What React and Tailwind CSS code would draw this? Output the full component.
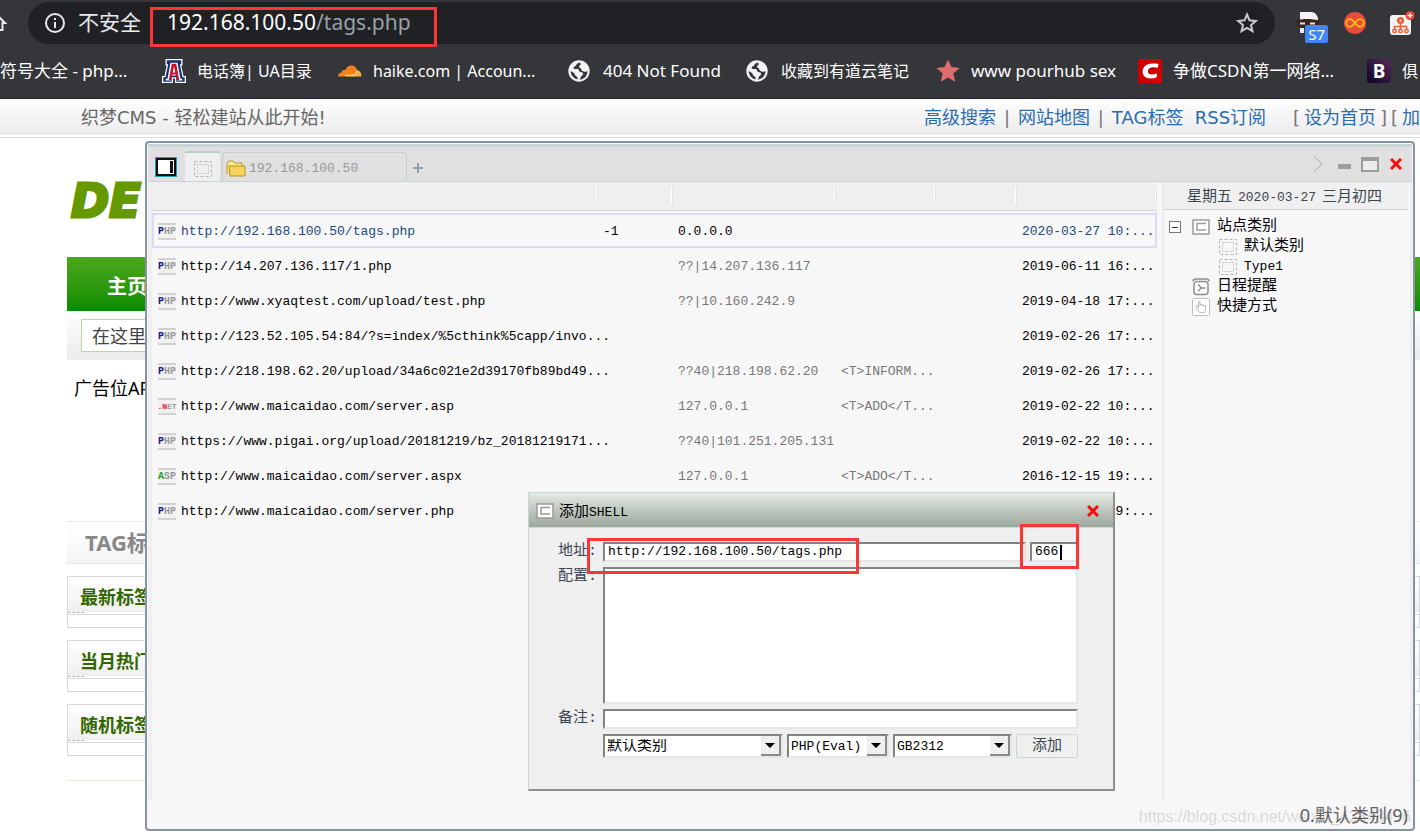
// App.jsx
// Browser window with a site page behind it and the shell manager floating on top.
import React from "react";

const BOOKMARKS = [
  { label: "符号大全 - php...", icon: null, width: "w-[162px]", size: "text-[17px]" },
  { label: "电话簿| UA目录", icon: "arizona", width: "w-[176px]", size: "text-base" },
  { label: "haike.com | Accoun...", icon: "cloud", width: "w-[230px]", size: "text-base" },
  { label: "404 Not Found", icon: "globe", width: "w-[178px]", size: "text-[17px]" },
  { label: "收藏到有道云笔记", icon: "globe", width: "w-[190px]", size: "text-base" },
  { label: "www pourhub sex", icon: "star", width: "w-[202px]", size: "text-[17px]" },
  { label: "争做CSDN第一网络...", icon: "csdn", width: "w-[229px]", size: "text-[17px]" },
  { label: "俱", icon: "bootstrap", width: "w-[80px]", size: "text-base" },
];

const SHELLS = [
  { type: "php", url: "http://192.168.100.50/tags.php", count: "-1", ip: "0.0.0.0", note: "", date: "2020-03-27 10:..." },
  { type: "php", url: "http://14.207.136.117/1.php", ip: "??|14.207.136.117", note: "", date: "2019-06-11 16:..." },
  { type: "php", url: "http://www.xyaqtest.com/upload/test.php", ip: "??|10.160.242.9", note: "", date: "2019-04-18 17:..." },
  { type: "php", url: "http://123.52.105.54:84/?s=index/%5cthink%5capp/invo...", ip: "", note: "", date: "2019-02-26 17:..." },
  { type: "php", url: "http://218.198.62.20/upload/34a6c021e2d39170fb89bd49...", ip: "??40|218.198.62.20", note: "<T>INFORM...", date: "2019-02-26 17:..." },
  { type: "net", url: "http://www.maicaidao.com/server.asp", ip: "127.0.0.1", note: "<T>ADO</T...", date: "2019-02-22 10:..." },
  { type: "php", url: "https://www.pigai.org/upload/20181219/bz_20181219171...", ip: "??40|101.251.205.131", note: "", date: "2019-02-22 10:..." },
  { type: "asp", url: "http://www.maicaidao.com/server.aspx", ip: "127.0.0.1", note: "<T>ADO</T...", date: "2016-12-15 19:..." },
  { type: "php", url: "http://www.maicaidao.com/server.php", ip: "", note: "", date: "2016-12-15 19:..." },
];

const TYPE_BADGE = {
  php: { head: "P", tail: "HP", color: "text-[#16168c]", size: "text-[10px]" },
  net: { head: ".N", tail: "ET", color: "text-[#f01818]", size: "text-[8px]" },
  asp: { head: "A", tail: "SP", color: "text-[#1c9a1c]", size: "text-[10px]" },
};

const SIDE_BLOCKS = ["最新标签", "当月热门", "随机标签"];

/* ---------- icons ---------- */

function BookmarkIcon({ name }) {
  if (name === "arizona")
    return (
      <svg viewBox="0 0 24 24" className="size-6 shrink-0">
        <path d="M3.500 0h17v6.500h-1.200L21.500 17H24v7H13v-4.500h-2V24H0v-7h2.500L4.700 6.500H3.500z" fill="#fff" />
        <path d="M4.800 1.300h14.400v4h-1.400l2.700 13h2.200v4.400h-8.400v-4.400h-4.600v4.400H1.300v-4.400h2.200l2.700-13H4.800z" fill="#12306b" />
        <path d="M8.500 3.800h7l3 16h1.800v1.700h-5v-1.700h.6l-.5-3.300H8.600l-.5 3.300h.6v1.700h-5v-1.700h1.800z" fill="#fff" />
        <path d="M9.800 4.800h4.400l3 16.200h-2.400l-.9-5.500h-3.800L9.200 21H6.800zM12 7.500l-1.300 6h2.600z" fill="#c8102e" />
      </svg>
    );
  if (name === "cloud")
    return (
      <svg viewBox="0 0 24 24" className="size-6 shrink-0">
        <path d="M0 17.500c0-2.500 1.600-3.800 3.600-4 .2-2 2-3 3.600-2.200C8.200 8.200 10.800 6.500 13.200 6.500c3.400 0 5.600 2.400 6 5.200l-3 5.800z" fill="#f38020" />
        <path d="M18.500 11.300c3-.3 5 2 4.800 6.200h-7.500l-8-.2 9.200-1.300z" fill="#faad3f" />
        <path d="M7 16.500l10-.6c.8-.3 1.200-2 1.500-3.500" fill="none" stroke="#fff" strokeWidth=".8" />
      </svg>
    );
  if (name === "globe")
    return (
      <svg viewBox="0 0 24 24" className="size-6 shrink-0">
        <circle cx="11" cy="12" r="10.700" fill="#f1f2f4" />
        <path d="M11.500 3.500c-1 1-3 1-3.400 2.800-.3 1.400-2.600.8-2.400 2.600.2 1.600 2.400 1 4 1.200 1.800.2 1 2.500 2.600 3 1.600.4 2.800.4 2.800 2 0 1.800-2.200 1.600-2.400 3.400-.1 1.300-1 1.600-1.700 2 5.300.2 8.700-4.300 8.500-8.600-1.400 1.200-3.600 1.200-5 .2-1.600-1.200-1-3-2.700-3.400-1.400-.4-.6-2 .4-2.600.9-.6.800-1.700-.7-2.600zM2.600 12c.2 4.400 3.300 7.800 7 8.300.4-1.600-.3-2.500-1.700-3.300-1.200-.7-1-2.600-2.300-3.300-.9-.4-2-.8-3-1.700z" fill="#35363a" />
      </svg>
    );
  if (name === "star")
    return (
      <svg viewBox="0 0 24 24" className="size-6 shrink-0">
        <path d="M12 .5l3.400 7.600 8.300.8-6.300 5.500 1.900 8.300L12 18.400l-7.300 4.300 1.900-8.300L.3 8.900l8.300-.8z" fill="#e16a6c" />
      </svg>
    );
  if (name === "csdn")
    return (
      <svg viewBox="0 0 24 24" className="size-6 shrink-0">
        <rect width="24" height="24" fill="#ce0000" />
        <path d="M20.500 5l-.7 3.800c-2-.5-4-.7-5.600-.5-2.700.3-4 1.800-4.200 3.600-.2 2.200 1 3.600 4 3.600 1.700 0 3.400-.3 5.200-.9l-.7 4c-2.300.7-4.200.9-6.200.8-4.800-.2-8-2.600-7.700-7.200.3-4.500 4-7.500 9.400-7.700 2.500-.1 4.500 0 6.500.5z" fill="#fff" />
      </svg>
    );
  return (
    <span className="flex size-6 shrink-0 items-center justify-center rounded-[3px] bg-linear-to-tr from-[#0c0528] to-[#5a2a58] text-[19px] font-bold text-white">
      B
    </span>
  );
}

function DashedBox() {
  return (
    <svg viewBox="0 0 18 16" className="h-4 w-[18px] shrink-0" fill="none" stroke="#b4b4b4">
      <rect x=".5" y=".5" width="17" height="15" strokeDasharray="3 2" />
      <rect x="3.500" y="3.500" width="11" height="9" strokeDasharray="2 1" stroke="#c8c8c8" />
    </svg>
  );
}

function PanelIcon() {
  return (
    <svg viewBox="0 0 18 16" className="h-4 w-[18px] shrink-0" fill="none">
      <rect x="1" y="1" width="16" height="14" fill="#fff" stroke="#9a9a9a" strokeWidth="1.500" />
      <path d="M14 4.500H5v6.500h9" stroke="#9a9a9a" strokeWidth="1.500" />
    </svg>
  );
}

function RedCross() {
  return (
    <svg viewBox="0 0 12 12" className="size-3" stroke="#f50d0d" strokeWidth="3">
      <path d="M1 1l10 10M11 1L1 11" />
    </svg>
  );
}

function TypeBadge({ type }) {
  const { head, tail, color, size } = TYPE_BADGE[type];
  return (
    <span className={`flex h-[17px] w-[18px] shrink-0 items-center justify-center border-y-2 border-[#d2d2d2] bg-[#f1f1f1] leading-none font-bold text-[#999] ${size}`}>
      <span className={color}>{head}</span>
      {tail}
    </span>
  );
}

/* ---------- browser chrome ---------- */

function AddressBar() {
  return (
    <div className="flex h-11 items-center pt-[2px]">
      <div className="w-[28px] shrink-0">
        <svg viewBox="0 0 28 24" className="h-6 w-[28px]" fill="none" stroke="#e8eaed" strokeWidth="2">
          <path d="M-7 12L-1 6l6 6H2.500v7H-5" />
        </svg>
      </div>
      <div className="flex h-[42px] flex-1 items-center rounded-full bg-[#202124] pr-4 pl-4">
        <svg viewBox="0 0 22 22" className="size-[22px]" fill="none" stroke="#e8eaed" strokeWidth="2">
          <circle cx="11" cy="11" r="9" />
          <path d="M11 10v6M11 6v2" />
        </svg>
        <span className="ml-3 w-[89px] text-[21px] text-[#e8eaed]">不安全</span>
        <div className="flex-1 text-[21px] text-[#9aa0a6]">
          <span className="text-white">192.168.100.50</span>/tags.php
        </div>
        <button aria-label="Bookmark this page">
          <svg viewBox="0 0 24 24" className="size-6" fill="none" stroke="#c7cacd" strokeWidth="2">
            <path d="M12 3.500l2.500 5.800 6.300.6-4.800 4.100 1.500 6.200-5.500-3.300-5.500 3.300L8 14l-4.800-4.100 6.300-.6z" />
          </svg>
        </button>
      </div>
      <div className="flex w-[145px] shrink-0 items-center pl-[21px]">
        <button aria-label="Proxy" className="relative mt-2 mr-[14px] h-8 w-[34px]">
          <svg viewBox="0 0 34 32" className="h-8 w-[34px]">
            <path d="M4 1h12c4 1 6 4 6 8v2H4z" fill="#f4f4f4" />
            <path d="M0 9.500c6-2 16-2 23 0v5c-3 3-8 3-11 0-3 3-8 3-11 0z" fill="#3a2422" />
            <path d="M4 12.500h5M14 12.500h5" stroke="#e5dcda" strokeWidth="2" />
            <path d="M4 17h4v5H4z" fill="#e8e8e8" />
          </svg>
          <span className="absolute right-[2px] bottom-0 rounded-[2px] bg-[#4285f4] px-[3px] text-[15px] leading-[18px] text-white">S7</span>
        </button>
        <button aria-label="Infinity" className="mr-[24px]">
          <svg viewBox="0 0 22 22" className="size-[22px]" fill="none">
            <circle cx="11" cy="11" r="11" fill="#e74c3c" />
            <path d="M11 11C9 8.500 8 7.200 6 7.200a3.800 3.800 0 000 7.600C8 14.800 9 13.500 11 11s3-3.800 5-3.800a3.800 3.800 0 010 7.600C14 14.800 13 13.500 11 11z" stroke="#fbbf0d" strokeWidth="1.800" />
          </svg>
        </button>
        <button aria-label="Site tree">
          <svg viewBox="0 0 25 25" className="size-[25px]" fill="none" stroke="#f05a30" strokeWidth="1.500">
            <rect x="0" y="4" width="21" height="20" rx="3" fill="#f3f3f3" stroke="none" />
            <circle cx="10.500" cy="9.500" r="2.300" strokeWidth="2.500" />
            <path d="M10.500 13v5M4.500 19v-3.500h12V19" />
            <circle cx="4.500" cy="20" r="1.700" />
            <circle cx="10.500" cy="20" r="1.700" />
            <circle cx="16.500" cy="20" r="1.700" />
            <circle cx="20" cy="4.500" r="4.500" fill="#f4422c" stroke="none" />
            <path d="M20 2v5M17.500 4.500h5" stroke="#fff" />
          </svg>
        </button>
      </div>
    </div>
  );
}

function BookmarkBar() {
  return (
    <nav className="flex h-[54px] overflow-hidden text-white">
      {BOOKMARKS.map((b) => (
        <a key={b.label} href="#" className={`flex shrink-0 items-center gap-[11px] whitespace-nowrap ${b.width} ${b.size}`}>
          {b.icon && <BookmarkIcon name={b.icon} />}
          {b.label}
        </a>
      ))}
    </nav>
  );
}

/* ---------- site page ---------- */

function SitePage() {
  return (
    <div className="flex-1 bg-white font-['Noto_Sans','Noto_Sans_CJK_SC',sans-serif] text-lg">
      <div className="flex h-9 items-center justify-between bg-linear-to-b from-white to-[#ebebeb] pt-[2px] pl-[81px] font-['DejaVu_Sans','Noto_Sans_CJK_SC',sans-serif] whitespace-nowrap text-[#666]">
        <span>织梦CMS - 轻松建站从此开始!</span>
        <div className="flex w-[496px] shrink-0 overflow-hidden text-[#2a6cb0]">
          <a href="#">高级搜索</a>
          <span className="w-[23px] text-center text-[#777]">|</span>
          <a href="#">网站地图</a>
          <span className="w-[23px] text-center text-[#777]">|</span>
          <a href="#" className="w-[87px]">TAG标签</a>
          <a href="#" className="w-[103px]">RSS订阅</a>
          <span className="flex gap-1">
            <span className="text-[#777]">[</span>
            <a href="#">设为首页</a>
            <span className="text-[#777]">]</span>
            <span className="text-[#777]">[</span>
            <a href="#">加</a>
          </span>
        </div>
      </div>
      <div className="mt-[2px] border-t border-[#ddd]" />

      <div className="ml-[67px] overflow-hidden">
        <div className="flex h-[119px] items-center pt-2 pl-1 font-['DejaVu_Sans',sans-serif] text-[46px] font-bold text-[#669900] italic [-webkit-text-stroke:3px_#669900]">
          DE
        </div>
        <div className="flex h-[54px] items-center bg-linear-to-b from-[#4aa81c] to-[#008c00] pt-[6px] pl-10 text-xl font-bold text-white">
          主页
        </div>
        <div className="bg-linear-to-b from-white to-[#ebebeb] px-[14px] py-2">
          <input
            aria-label="搜索"
            placeholder="在这里"
            className="h-[33px] w-[400px] border border-[#b5d79b] bg-white px-[10px] text-lg placeholder:text-[#444]"
          />
        </div>
        <p className="mt-[14px] pl-[7px] leading-7 whitespace-nowrap text-black">广告位AP</p>

        <h2 className="mt-[119px] h-[43px] border-y border-[#e6e6e6] bg-linear-to-b from-white to-[#f4f4f4] pl-[18px] text-[22px] leading-10 font-bold text-[#888]">
          TAG标
        </h2>
        {SIDE_BLOCKS.map((title) => (
          <section key={title} className="mt-3 h-[52px] border border-[#d8d8d8]">
            <h3 className="h-[35px] bg-linear-to-b from-white to-[#efefef] pl-3 text-lg leading-10 font-bold text-[#336600]">
              {title}
            </h3>
            <div className="w-4 border-t border-dashed border-[#b4c4a0]" />
            <div className="mt-px border-t border-[#d8d8d8]" />
          </section>
        ))}
        <div className="mt-6 border-t border-[#e4efd3]" />
      </div>
    </div>
  );
}

/* ---------- shell manager ---------- */

function TitleBar() {
  return (
    <div className="flex h-[38px] items-end border-t-[3px] border-b border-[#c9d4d4] bg-[#e0e0e0]">
      <button aria-label="Toggle panel" className="mb-1 ml-[7px] w-[22px]">
        <svg viewBox="0 0 22 20" className="h-5 w-[22px]">
          <rect width="22" height="20" fill="#1ba3b8" />
          <rect x="1" y="1" width="20" height="18" fill="#111" />
          <rect x="3" y="3" width="16" height="14" fill="#fff" />
          <rect x="15" y="4" width="3" height="12" fill="#111" />
        </svg>
      </button>
      <button aria-label="Home" className="ml-[8px] flex h-[30px] w-[35px] items-center justify-center rounded-t-[3px] border-t-2 border-[#b9cccc] bg-[#efefef] pt-1">
        <DashedBox />
      </button>
      <button className="ml-[2px] flex h-[29px] w-[185px] items-center gap-[3px] rounded-t-[4px] border border-b-0 border-[#c5cfcf] pt-[3px] pl-[3px] text-[#999]">
        <svg viewBox="0 0 20 18" className="h-[18px] w-5">
          <path d="M1 14V3l2-2h4l2 2h7v3" fill="#fbe59a" stroke="#b8941c" />
          <path d="M3 6h16v10H4z" fill="#f6d45c" stroke="#b8941c" />
        </svg>
        192.168.100.50
      </button>
      <button aria-label="New tab" className="mb-[8px] ml-[6px]">
        <svg viewBox="0 0 10 10" className="size-[10px]" stroke="#8fa0aa" strokeWidth="2">
          <path d="M5 0v10M0 5h10" />
        </svg>
      </button>
      <div className="mb-2 ml-auto flex items-center pr-[10px]">
        <svg viewBox="0 0 10 18" className="mr-[15px] h-[18px] w-[10px]" fill="none" stroke="#b0b0b0">
          <path d="M1 1l8 8-8 8" />
        </svg>
        <button aria-label="Minimize" className="mt-[5px] mr-[10px] h-[5px] w-[13px] bg-[#9c9c9c]" />
        <button aria-label="Maximize" className="mr-[11px] h-[15px] w-[18px] border-2 border-t-4 border-[#9c9c9c] bg-[#ececec]" />
        <button aria-label="Close">
          <RedCross />
        </button>
      </div>
    </div>
  );
}

function ShellTable() {
  return (
    <table className="w-full table-fixed border-collapse text-left whitespace-nowrap">
      <colgroup>
        <col />
        <col className="w-[75px]" />
        <col className="w-[163px]" />
        <col className="w-[100px]" />
        <col className="w-[81px]" />
        <col className="w-[140px]" />
      </colgroup>
      <thead>
        <tr className="h-[28px] border-b border-[#d2d2d2] bg-[#efefef]">
          {["url", "count", "ip", "note", "extra", "date"].map((key) => (
            <th key={key} className="p-0">
              <div className="border-r border-[#e2e2e2]">
                <div className="h-[17px] border-r border-white" />
              </div>
            </th>
          ))}
        </tr>
        <tr className="h-[3px]" />
      </thead>
      <tbody>
        {SHELLS.map((s, i) => {
          const selected = i === 0;
          return (
            <tr key={s.url} className={`h-[35px] ${selected ? "outline-2 -outline-offset-2 outline-[#d8daf6]" : ""}`}>
              <td className={`p-0 pt-[2px] pl-[6px] ${selected ? "text-[#1b4a7c]" : "text-black"}`}>
                <div className="flex items-center gap-[5px]">
                  <TypeBadge type={s.type} />
                  {s.url}
                </div>
              </td>
              <td className="p-0 pt-[2px] pl-[5px]">{s.count}</td>
              <td className={`p-0 pt-[2px] pl-[5px] ${selected ? "text-black" : "text-[#777]"}`}>{s.ip}</td>
              <td className="p-0 pt-[2px] pl-[5px] text-[#777]">{s.note}</td>
              <td />
              <td className={`p-0 pt-[2px] pl-[5px] ${selected ? "text-[#1b4a7c]" : "text-black"}`}>{s.date}</td>
            </tr>
          );
        })}
      </tbody>
    </table>
  );
}

function CategoryPanel() {
  return (
    <aside className="w-[250px] shrink-0 border-x-2 border-[#ececec] pr-[2px] text-[15px] text-black">
      <div className="flex h-[28px] items-center gap-[6px] border-b border-[#d2d2d2] bg-[#efefef] pt-[5px] pl-[23px] text-[#3c4650]">
        星期五<span className="text-[13px]">2020-03-27</span>三月初四
      </div>
      <ul className="pt-[7px] leading-5">
        <li className="flex items-center pl-[5px]">
          <span className="mr-[11px] flex size-3 items-center justify-center border border-[#777] bg-white">
            <span className="h-px w-[6px] bg-[#333]" />
          </span>
          <PanelIcon />
          <span className="ml-[7px]">站点类别</span>
        </li>
        <li className="flex items-center gap-[7px] pl-[55px]"><DashedBox />默认类别</li>
        <li className="flex items-center gap-[7px] pl-[55px] text-[13px] leading-5"><DashedBox />Type1</li>
        <li className="flex items-center gap-[7px] pl-[28px]">
          <svg viewBox="0 0 18 18" className="size-[18px]" fill="none" stroke="#8e8e8e" strokeWidth="1.500">
            <path d="M1 3.500C1 1 3 1 4 1h10c1 0 3 0 3 2.500" />
            <rect x="2" y="3.500" width="14" height="13" rx="3" fill="#fff" />
            <path d="M6 6.500l3.500 3.500L6 13M9 10h4.500" />
          </svg>
          日程提醒
        </li>
        <li className="flex items-center gap-[7px] pl-[28px]">
          <svg viewBox="0 0 18 18" className="size-[18px]" fill="none" stroke="#bdbdbd">
            <rect x=".5" y=".5" width="17" height="17" rx="1" fill="#fff" />
            <path d="M6.500 10V3.500h1.500V8M8 6.500h2V8M10 7h2v1.500M12 7.500h1.500V12l-1 2.500h-5L4 10V8h1.500l1 2" />
          </svg>
          快捷方式
        </li>
      </ul>
    </aside>
  );
}

const FIELD = "border-2 border-t-[#828282] border-l-[#828282] border-r-[#e6e6e6] border-b-[#e6e6e6] bg-white text-[13px] text-black";

function DropDown({ label, options, className, textClass }) {
  return (
    <div className={`relative ${className}`}>
      <select aria-label={label} className={`h-6 w-full appearance-none pl-[2px] leading-none ${FIELD} ${textClass}`}>
        {options.map((o) => (
          <option key={o}>{o}</option>
        ))}
      </select>
      <span className="pointer-events-none absolute top-[2px] right-[2px] flex h-5 w-5 items-center justify-center border-r-2 border-b-2 border-[#8a8a8a] bg-[#efefef]">
        <svg viewBox="0 0 10 5" className="h-[5px] w-[10px]">
          <path d="M0 0h10L5 5z" fill="#000" />
        </svg>
      </span>
    </div>
  );
}

function AddShellDialog() {
  return (
    <div
      role="dialog"
      aria-label="添加SHELL"
      className="absolute top-[349px] left-[381px] w-[587px] border border-r-2 border-b-2 border-[#c9d4d4] border-r-[#8f8f8f] border-b-[#8f8f8f] bg-[#efefef] pb-[31px]"
    >
      <div className="flex h-[35px] items-center border-b border-[#d5dcd8] bg-linear-to-b from-[#e4ebe4] to-[#9ca79d] pt-[2px] pr-[14px] pl-[7px] text-black">
        <PanelIcon />
        <span className="mr-auto ml-[5px] pt-1 text-[15px]">
          添加<span className="text-[13px]">SHELL</span>
        </span>
        <button aria-label="关闭">
          <RedCross />
        </button>
      </div>

      <form className="pt-[14px] pr-[35px] pl-[29px] text-[15px] leading-5 text-[#3c4650]" onSubmit={(e) => e.preventDefault()}>
        <div className="flex h-5 items-center">
          <label htmlFor="address" className="w-[45px]">地址:</label>
          <input id="address" defaultValue="http://192.168.100.50/tags.php" className={`h-5 flex-1 pl-[3px] ${FIELD}`} />
          <span className="relative ml-1 flex w-[48px]">
            <input aria-label="密码" defaultValue="666" className={`h-5 w-full pl-[3px] ${FIELD}`} />
            {/* text cursor */}
            <span className="absolute top-[3px] left-[30px] h-[15px] w-[2px] bg-black" />
          </span>
        </div>
        <div className="mt-[5px] flex items-start">
          <label htmlFor="config" className="w-[45px]">配置:</label>
          <textarea id="config" className={`h-[137px] flex-1 resize-none ${FIELD}`} />
        </div>
        <div className="mt-[5px] flex h-5 items-center">
          <label htmlFor="remark" className="w-[45px]">备注:</label>
          <input id="remark" className={`h-5 flex-1 ${FIELD}`} />
        </div>
        <div className="mt-[5px] flex gap-1 pl-[45px]">
          <DropDown label="类别" options={["默认类别", "Type1"]} className="w-[180px]" textClass="text-[15px]" />
          <DropDown label="脚本类型" options={["PHP(Eval)"]} className="w-[102px]" textClass="" />
          <DropDown label="编码" options={["GB2312", "UTF-8"]} className="w-[119px]" textClass="" />
          <button type="submit" className="h-6 flex-1 rounded-[2px] border border-[#c9d4d4] leading-none">添加</button>
        </div>
      </form>
    </div>
  );
}

function ShellManager() {
  return (
    <div className="absolute top-[141px] right-[5px] bottom-[5px] left-[145px] flex flex-col rounded-[4px] border-2 border-[#8794a0] bg-[#f7f7f7] p-px font-['Liberation_Mono','Noto_Sans_CJK_SC',monospace] text-[13px] text-black">
      <TitleBar />
      <div className="flex flex-1">
        <div className="min-w-0 flex-1 border-l-4 border-[#efefef] pr-[5px]">
          <ShellTable />
        </div>
        <CategoryPanel />
      </div>
      <footer className="flex h-[27px] shrink-0 items-center justify-end pr-1 font-['Noto_Sans','Noto_Sans_CJK_SC',sans-serif] text-lg text-[#666]">
        0.默认类别(9)
      </footer>
      <AddShellDialog />
    </div>
  );
}

export default function App() {
  return (
    <div className="relative flex min-h-screen flex-col overflow-hidden bg-white">
      <header className="border-b border-[#242528] bg-[#35363a] font-['Noto_Sans','Noto_Sans_CJK_SC',sans-serif]">
        <AddressBar />
        <BookmarkBar />
      </header>
      <SitePage />
      <ShellManager />

      {/* Annotation frames */}
      <div className="pointer-events-none absolute top-[7px] left-[150px] h-10 w-[287px] border-[3px] border-[#fb3636]" />
      <div className="pointer-events-none absolute top-[538px] left-[587px] h-9 w-[272px] border-[3px] border-[#fb3636]" />
      <div className="pointer-events-none absolute top-[524px] left-[1020px] h-[45px] w-[59px] border-[3px] border-[#fb3636]" />

      {/* Watermark */}
      <span className="pointer-events-none absolute right-[9px] bottom-[7px] font-['Liberation_Sans',sans-serif] text-base text-black/15">
        https://blog.csdn.net/weixin_43848456
      </span>
    </div>
  );
}
